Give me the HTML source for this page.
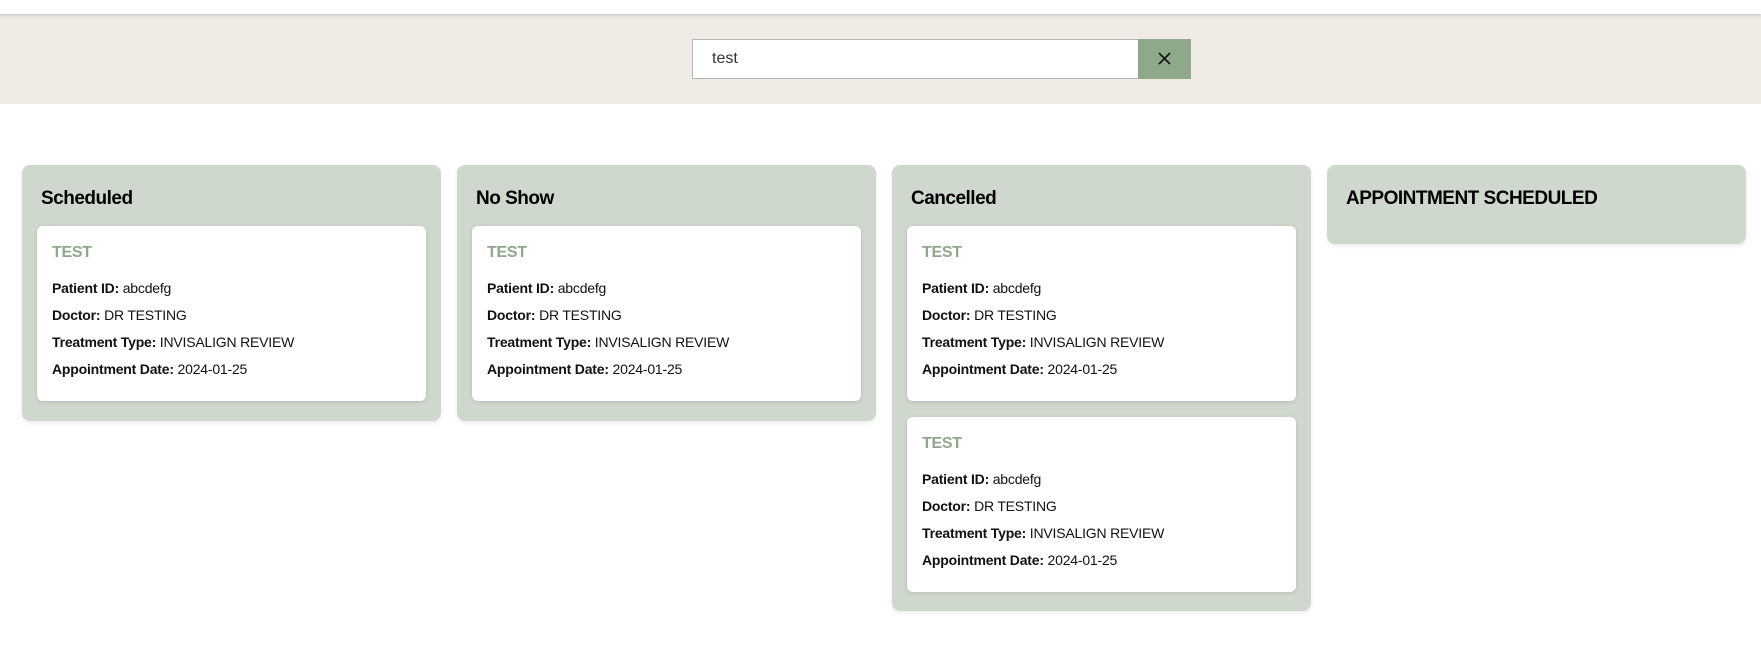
<!DOCTYPE html>
<html><head><meta charset="utf-8"><style>
*{box-sizing:border-box;margin:0;padding:0}
body{width:1761px;height:661px;background:#fff;font-family:"Liberation Sans",sans-serif;position:relative;overflow:hidden}
.top{position:absolute;left:0;top:0;width:1761px;height:14px;background:#fff;box-shadow:0 2px 4px rgba(0,0,0,.15);z-index:2}
.hdr{position:absolute;left:0;top:14px;width:1761px;height:90px;background:#f0ece5}
.inp{position:absolute;left:692px;top:39px;width:447px;height:40px;background:#fff;border:1px solid #b5b5b5;font-size:16px;padding:10px 19px;color:#333}
.btn{position:absolute;left:1138px;top:39px;width:53px;height:40px;background:#8fa88b}
.col{position:absolute;top:165px;width:419px;background:#cfd8cd;border-radius:8px;padding:0 15px;box-shadow:0 2px 4px rgba(0,0,0,.08)}
.col h2{font-size:19px;font-weight:bold;color:#000;height:61px;line-height:68px;padding-left:4px;letter-spacing:-.5px}
.card{background:#fff;border-radius:6px;height:175px;margin-bottom:16px;padding:17px 15px 0;box-shadow:0 1px 4px rgba(0,0,0,.12)}
.card .t{color:#8fa88b;font-weight:bold;font-size:16px;height:32px;line-height:20px;letter-spacing:-.3px}
.card p{font-size:14px;line-height:27px;color:#111;letter-spacing:-.2px}
.card b{font-weight:bold}
</style></head><body>
<div class="top"></div>
<div class="hdr"></div>
<div class="inp">test</div>
<div class="btn"><svg width="53" height="40"><path d="M21 14L32 25M32 14L21 25" stroke="#111" stroke-width="1.6"/></svg></div>

<div class="col" style="left:22px;height:256px"><h2>Scheduled</h2>
<div class="card"><div class="t">TEST</div><p><b>Patient ID:</b> abcdefg</p><p><b>Doctor:</b> DR TESTING</p><p><b>Treatment Type:</b> INVISALIGN REVIEW</p><p><b>Appointment Date:</b> 2024-01-25</p></div></div>

<div class="col" style="left:457px;height:256px"><h2>No Show</h2>
<div class="card"><div class="t">TEST</div><p><b>Patient ID:</b> abcdefg</p><p><b>Doctor:</b> DR TESTING</p><p><b>Treatment Type:</b> INVISALIGN REVIEW</p><p><b>Appointment Date:</b> 2024-01-25</p></div></div>

<div class="col" style="left:892px;height:446px"><h2>Cancelled</h2>
<div class="card"><div class="t">TEST</div><p><b>Patient ID:</b> abcdefg</p><p><b>Doctor:</b> DR TESTING</p><p><b>Treatment Type:</b> INVISALIGN REVIEW</p><p><b>Appointment Date:</b> 2024-01-25</p></div>
<div class="card"><div class="t">TEST</div><p><b>Patient ID:</b> abcdefg</p><p><b>Doctor:</b> DR TESTING</p><p><b>Treatment Type:</b> INVISALIGN REVIEW</p><p><b>Appointment Date:</b> 2024-01-25</p></div></div>

<div class="col" style="left:1327px;height:79px"><h2>APPOINTMENT SCHEDULED</h2></div>
</body></html>
